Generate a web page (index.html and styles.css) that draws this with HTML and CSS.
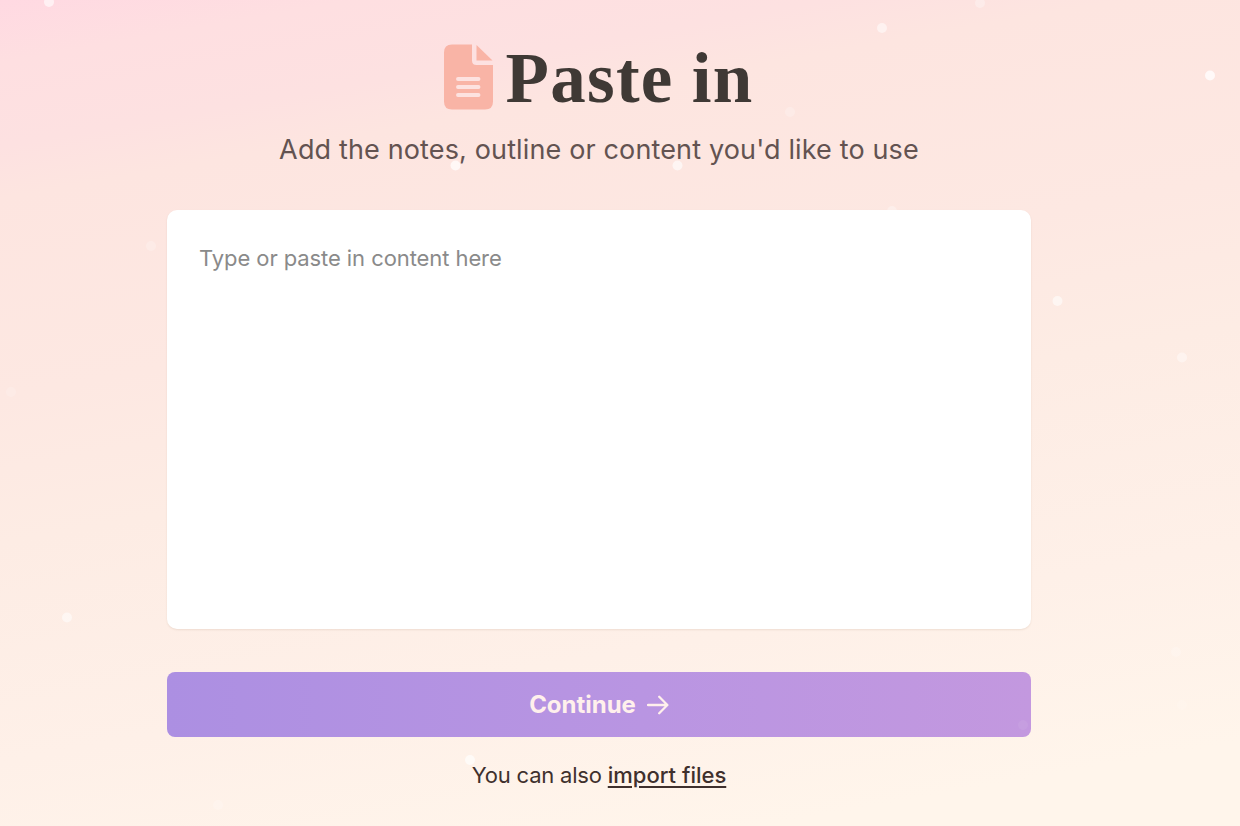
FILE: index.html
```html
<!DOCTYPE html>
<html lang="en">
<head>
<meta charset="utf-8">
<title>Paste in</title>
<link rel="stylesheet" href="styles.css">
</head>
<body>
<main class="page">
  <header class="header">
    <h1 class="title">
      <svg class="title-icon" viewBox="0 0 49 65" aria-hidden="true">
        <path fill="#f9b4a6" d="M8 0H28V16Q28 20.500 32.500 20.500H49V57Q49 65 41 65H8Q0 65 0 57V8Q0 0 8 0Z"/>
        <path fill="#f9b4a6" d="M32.500 0.500L48.500 16H32.500Z"/>
        <path stroke="#fde2e0" stroke-width="3.900" stroke-linecap="round" d="M14 34.500H34.500M14 42.500H34.500M14 50.500H34.500"/>
      </svg>
      <span class="title-text">Paste in</span>
    </h1>
    <p class="subtitle">Add the notes, outline or content you'd like to use</p>
  </header>
  <textarea class="editor" placeholder="Type or paste in content here"></textarea>
  <button class="continue" type="button">
    <span>Continue</span>
    <svg class="arrow" viewBox="0 0 22 20" aria-hidden="true"><path d="M1 10H20M12.200 1.800L20.400 10L12.200 18.200"/></svg>
  </button>
  <p class="hint">You can also <a class="link" href="#">import files</a></p>
</main>
<svg class="snow" viewBox="0 0 1240 826" aria-hidden="true">
  <circle cx="49" cy="2" r="5" opacity=".6"/>
  <circle cx="980" cy="3" r="5" opacity=".3"/>
  <circle cx="882" cy="28" r="5" opacity=".5"/>
  <circle cx="1210" cy="75.500" r="5" opacity=".75"/>
  <circle cx="790" cy="112" r="5" opacity=".22"/>
  <circle cx="455.500" cy="165.500" r="5" opacity=".7"/>
  <circle cx="677.500" cy="165.500" r="5" opacity=".6"/>
  <circle cx="892" cy="211" r="5" opacity=".3"/>
  <circle cx="151" cy="246" r="5" opacity=".22"/>
  <circle cx="1057.500" cy="301" r="5" opacity=".55"/>
  <circle cx="1182" cy="357.500" r="5" opacity=".4"/>
  <circle cx="11" cy="392" r="5" opacity=".16"/>
  <circle cx="67" cy="617.500" r="5" opacity=".5"/>
  <circle cx="1176" cy="652" r="5" opacity=".2"/>
  <circle cx="1023" cy="725" r="5" opacity=".06"/>
  <circle cx="1182" cy="705" r="5" opacity=".12"/>
  <circle cx="470" cy="760" r="5" opacity=".65"/>
  <circle cx="218" cy="805" r="5" opacity=".2"/>
</svg>
</body>
</html>
```
FILE: styles.css
```css
* { box-sizing: border-box; }

body {
  margin: 0;
  height: 826px;
  overflow: hidden;
  font-family: Inter, "Liberation Sans", sans-serif;
  background: linear-gradient(170deg, #ffd9e2 0%, #fedfe1 6%, #fde1e1 14%, #fde5e0 19%, #fde8e2 38%, #fdece4 52%, #fef0e8 73%, #fff5eb 92%);
}

.page {
  width: 864px;
  margin-left: 167px;
  padding-top: 44px;
  display: flex;
  flex-direction: column;
}

.header {
  height: 166px;
  display: flex;
  flex-direction: column;
  align-items: center;
}

.title {
  margin: 0;
  height: 67px;
  display: flex;
  align-items: flex-start;
  gap: 12px;
  color: #3f3935;
}

.title-icon {
  width: 49px;
  height: 66px;
  fill: none;
}

.title-text {
  font: 700 71px/67px "Liberation Serif", serif;
  padding-top: 1px;
  letter-spacing: 1.300px;
  word-spacing: -1px;
  white-space: nowrap;
}

.subtitle {
  margin: 22px 0 0;
  font-size: 27px;
  line-height: 34px;
  letter-spacing: 0.140px;
  color: #635351;
  white-space: nowrap;
}

.editor {
  display: block;
  width: 100%;
  height: 419px;
  padding: 33px 32px;
  border: 0;
  border-radius: 10px;
  resize: none;
  background: #fff;
  box-shadow: 0 1px 2px rgba(120, 80, 50, 0.120);
  font: 400 22px/30px Inter, sans-serif;
  letter-spacing: -0.080px;
  color: #3f3935;
}

.editor::placeholder { color: #8a8a8a; opacity: 1; }

.continue {
  height: 65px;
  margin-top: 43px;
  padding: 0;
  border: 0;
  border-radius: 8px;
  display: flex;
  align-items: center;
  justify-content: center;
  gap: 11px;
  font: 700 24px/30px Inter, sans-serif;
  letter-spacing: -0.020px;
  color: #fff0ec;
  background: linear-gradient(90deg, #ac8fe2, #b995e2 55%, #c398df);
}

.arrow {
  width: 22px;
  height: 20px;
  fill: none;
  stroke: #fff0ec;
  stroke-width: 2.300;
  stroke-linecap: round;
  stroke-linejoin: round;
}

.hint {
  margin: 23px 0 0;
  font-size: 22px;
  line-height: 30px;
  letter-spacing: -0.200px;
  text-align: center;
  color: #3f302d;
}

.link {
  font-weight: 500;
  letter-spacing: 0;
  color: inherit;
  text-underline-offset: 3px;
  text-decoration-thickness: 2px;
}

/* Snow drifts over the whole page */
.snow {
  position: absolute;
  top: 0;
  left: 0;
  width: 1240px;
  height: 826px;
  fill: #fff;
  pointer-events: none;
}
```
